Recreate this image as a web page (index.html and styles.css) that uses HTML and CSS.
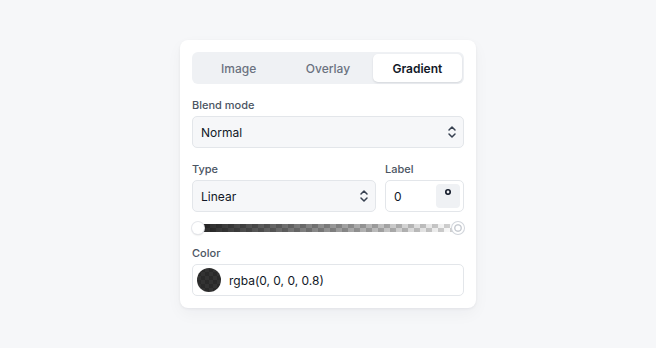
FILE: index.html
```html
<!doctype html>
<html lang="en">
<head>
	<meta charset="UTF-8">
	<title>Background settings</title>
	<link rel="stylesheet" href="styles.css">
</head>
<body>
	<div class="panel">
		<div class="tabs">
			<div class="tab">Image</div>
			<div class="tab">Overlay</div>
			<div class="tab active">Gradient</div>
		</div>

		<div class="field">
			<label>Blend mode</label>
			<div class="select">
				<span>Normal</span>
				<svg class="chev" width="10" height="14" viewBox="0 0 10 14"><path d="M2 5l3-3 3 3M2 9l3 3 3-3" fill="none" stroke="#374151" stroke-width="1.5" stroke-linecap="round" stroke-linejoin="round"/></svg>
			</div>
		</div>

		<div class="row">
			<div class="field">
				<label>Type</label>
				<div class="select">
					<span>Linear</span>
					<svg class="chev" width="10" height="14" viewBox="0 0 10 14"><path d="M2 5l3-3 3 3M2 9l3 3 3-3" fill="none" stroke="#374151" stroke-width="1.5" stroke-linecap="round" stroke-linejoin="round"/></svg>
				</div>
			</div>
			<div class="field">
				<label>Label</label>
				<div class="input">
					<span>0</span>
					<div class="unit">
						<svg width="8" height="8" viewBox="0 0 8 8"><circle cx="4" cy="4" r="2.2" fill="none" stroke="#111827" stroke-width="1.6"/></svg>
					</div>
				</div>
			</div>
		</div>

		<div class="slider">
			<div class="track"></div>
			<div class="thumb left"></div>
			<div class="thumb right"></div>
		</div>

		<div class="field">
			<label>Color</label>
			<div class="input color">
				<span class="swatch"></span>
				<span>rgba(0, 0, 0, 0.8)</span>
			</div>
		</div>
	</div>
</body>
</html>
```

FILE: styles.css
```css
*{
	margin:0;
	padding:0;
	box-sizing:border-box;
}
html, body{
	height:100%;
}
body{
	background:#f6f7f9;
	font-family:Inter, "Noto Sans", sans-serif;
	color:#111827;
	display:flex;
	align-items:center;
	justify-content:center;
}
.panel{
	width:296px;
	background:#fff;
	border-radius:8px;
	padding:12px;
	box-shadow:0 1px 3px rgba(15, 23, 42, 0.06), 0 6px 16px rgba(15, 23, 42, 0.04);
	display:flex;
	flex-direction:column;
	gap:12px;
}
.tabs{
	display:grid;
	grid-template-columns:1fr 1fr 1fr;
	background:#eff1f4;
	border-radius:6px;
	padding:2px;
	height:32px;
}
.tab{
	display:flex;
	align-items:center;
	justify-content:center;
	font-size:12px;
	font-weight:500;
	color:#6b7280;
	border-radius:5px;
}
.tab.active{
	background:#fff;
	color:#111827;
	font-weight:600;
	box-shadow:0 1px 2px rgba(15, 23, 42, 0.12);
}
.field{
	display:flex;
	flex-direction:column;
	gap:4px;
}
.field label{
	font-size:11px;
	line-height:16px;
	font-weight:500;
	color:#4b5563;
	padding-top:1px;
	margin-bottom:-1px;
}
.row{
	display:grid;
	grid-template-columns:1fr 79px;
	gap:9px;
}
.select, .input{
	height:32px;
	border:1px solid #e3e6ea;
	border-radius:5px;
	display:flex;
	align-items:center;
	padding:0 8px;
	font-size:12px;
}
.select{
	background:#f6f7f9;
	justify-content:space-between;
	padding-right:6px;
}
.input{
	background:#fff;
	justify-content:space-between;
	padding-right:3px;
}
.unit{
	width:24px;
	height:24px;
	border-radius:4px;
	background:#eff1f4;
	display:flex;
	justify-content:center;
	padding-top:4px;
}
.unit svg{
	display:block;
}
.slider{
	position:relative;
	height:16px;
	margin-top:-4px;
	margin-bottom:-4px;
}
.track{
	position:absolute;
	left:6px;
	right:6px;
	top:4px;
	height:8px;
	background:
		linear-gradient(to right, rgba(0,0,0,0.85), rgba(0,0,0,0)),
		repeating-conic-gradient(#d4d4d4 0 25%, #ffffff 0 50%) 0 0/12px 8px;
}
.thumb{
	position:absolute;
	top:2px;
	width:12px;
	height:12px;
	border-radius:50%;
	background:#fff;
	box-shadow:0 0 0 1px #e5e7eb, 0 1px 2px rgba(0,0,0,0.2);
}
.thumb.left{
	left:0;
}
.thumb.right{
	right:0;
	border:2px solid #fff;
	background:#fff;
	box-shadow:0 0 0 1px #d1d5db, inset 0 0 0 1.5px #c9cdd3;
}
.input.color{
	justify-content:flex-start;
	gap:8px;
	padding-left:4px;
}
.swatch{
	width:24px;
	height:24px;
	border-radius:50%;
	background:
		linear-gradient(rgba(0,0,0,0.8), rgba(0,0,0,0.8)),
		repeating-conic-gradient(#cfcfcf 0 25%, #ffffff 0 50%) 0 0/8px 8px;
}
```
